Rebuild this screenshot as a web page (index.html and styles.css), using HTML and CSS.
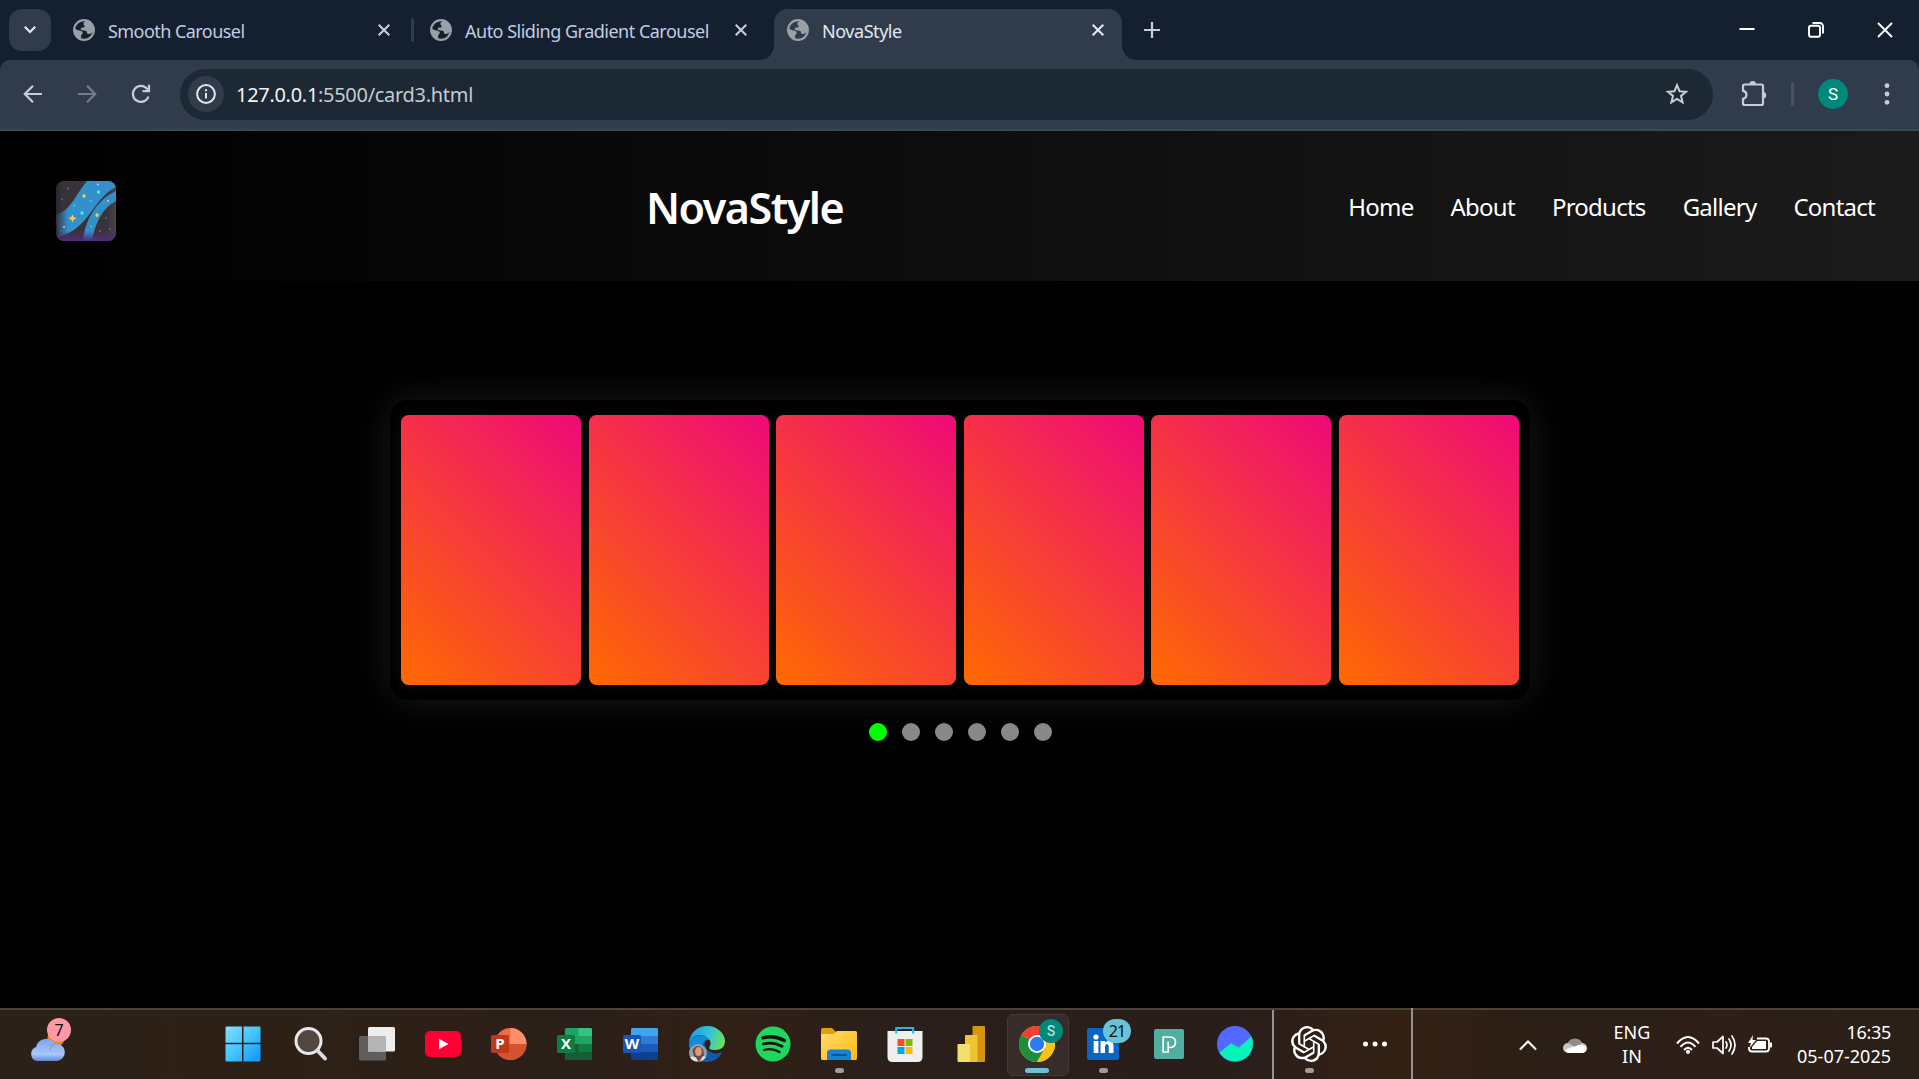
FILE: index.html
```html
<!DOCTYPE html>
<html lang="en">
<head>
<meta charset="utf-8">
<title>NovaStyle</title>
<link rel="stylesheet" href="styles.css">
</head>
<body>
<svg class="defs" width="0" height="0" aria-hidden="true">
  <symbol id="globe" viewBox="0 0 22 22">
    <circle cx="11" cy="11" r="9.9" fill="none" stroke="#9aa0a6" stroke-width="2.1"/>
    <path d="M14 1.6c-2 .6-3.300 1.500-3.600 3.200-.3 1.400 1.200 1.200 1.300 2.500.1 1.500-1.500 1.300-3 1.400-1.300.2-1 1.600-.4 2.300.8.900 3.900.2 5 1.100 1.100.9.200 2.600 1.700 2.800 1.800.3 4.600-.9 5.400-2.600C22 7 18.300 2.400 14 1.600zM1.500 8.800c1.400 2.200 3.300 2.300 5 2.700 1.800.4 3.200.6 3.300 2.300.1 1.400-1.600 1.500-1.700 3-.1 1.200.5 2.300-.3 3.300C3.300 19.300.5 13.800 1.500 8.800z" fill="#9aa0a6"/>
  </symbol>
  <symbol id="cross" viewBox="0 0 14 14"><path d="M1.700 1.700l10.600 10.600M12.300 1.700L1.700 12.300" fill="none" stroke="currentColor" stroke-width="2.100"/></symbol>
</svg>

<header class="browser">
  <div class="tabstrip">
    <div class="tab-search"><svg width="14" height="10" viewBox="0 0 14 10"><path d="M1.800 1.800L7 7l5.200-5.200" fill="none" stroke="#e3e8f0" stroke-width="2.200"/></svg></div>
    <div class="tab tab-first"><svg class="fav"><use href="#globe"/></svg><span class="t1">Smooth Carousel</span><svg class="x"><use href="#cross"/></svg></div>
    <i class="tab-sep"></i>
    <div class="tab tab-second"><svg class="fav"><use href="#globe"/></svg><span class="t2">Auto Sliding Gradient Carousel</span><svg class="x"><use href="#cross"/></svg></div>
    <div class="tab active"><svg class="fav"><use href="#globe"/></svg><span class="t3">NovaStyle</span><svg class="x"><use href="#cross"/></svg></div>
    <svg class="plus" width="16" height="16" viewBox="0 0 16 16"><path d="M8 0v16M0 8h16" stroke="#c3cbe0" stroke-width="2.200"/></svg>
    <div class="window-buttons">
      <svg width="16" height="16" viewBox="0 0 16 16"><path d="M.5 7h15" stroke="#fff" stroke-width="2"/></svg>
      <svg width="16" height="16" viewBox="0 0 16 16"><rect x="1" y="3.800" width="11" height="11" rx="2" fill="none" stroke="#fff" stroke-width="1.900"/><path d="M4.500 1h7q3.500 0 3.500 3.500v7" fill="none" stroke="#fff" stroke-width="1.900"/></svg>
      <svg width="16" height="16" viewBox="0 0 16 16"><path d="M1 1l14 14M15 1L1 15" stroke="#fff" stroke-width="1.900"/></svg>
    </div>
  </div>
  <div class="toolbar">
    <svg class="nav-icon" width="20" height="20" viewBox="0 0 20 20"><path d="M19 10H2M10 1.800L1.800 10l8.200 8.200" fill="none" stroke="#c3cbe0" stroke-width="2.200"/></svg>
    <svg class="nav-icon" width="20" height="20" viewBox="0 0 20 20"><path d="M1 10h17M10 1.800l8.200 8.200-8.200 8.200" fill="none" stroke="#747d8c" stroke-width="2.200"/></svg>
    <svg class="nav-icon" width="20" height="20" viewBox="0 0 20 20"><path d="M17.500 12.500a8 8 0 1 1-1.300-7.600L18 6.900M18 .8v6.400h-6.500" fill="none" stroke="#c3cbe0" stroke-width="2.200"/></svg>
    <div class="omnibox">
      <div class="info"><svg width="20" height="20" viewBox="0 0 20 20"><circle cx="10" cy="10" r="8.900" fill="none" stroke="#e3e6ea" stroke-width="2"/><path d="M10 9v5.500M10 5.200v2.100" stroke="#e3e6ea" stroke-width="2"/></svg></div>
      <span class="url"><b>127.0.0.1</b>:5500/card3.html</span>
      <svg class="star" width="24" height="24" viewBox="0 0 24 24"><path d="M12 3.200l2.500 6 6.500.5-5 4.200 1.600 6.400L12 16.900l-5.600 3.400L8 13.900 3 9.700l6.500-.5z" fill="none" stroke="#c9cdd0" stroke-width="2"/></svg>
    </div>
    <svg class="ext" width="28" height="28" viewBox="0 0 28 28"><path d="M5.500 4.500h17q1.500 0 1.500 1.500v17.500q0 1.500-1.500 1.500h-17Q4 25 4 23.500v-4.700c4.600-.6 4.600-7.300 0-8V6q0-1.500 1.500-1.500z" fill="none" stroke="#c3cbe0" stroke-width="2.200"/><path d="M10.500 4.200a3.200 3.200 0 0 1 6.400 0zM24 12a3.200 3.200 0 0 1 0 6.400z" fill="#c3cbe0"/></svg>
    <i class="tool-sep"></i>
    <div class="avatar">S</div>
    <svg class="menu" width="6" height="28" viewBox="0 0 6 28"><g fill="#c3cbe0"><circle cx="3" cy="5.700" r="2.400"/><circle cx="3" cy="14" r="2.400"/><circle cx="3" cy="22.300" r="2.400"/></g></svg>
  </div>
</header>

<main class="page">
  <div class="site-header">
    <svg class="logo" viewBox="0 0 60 60">
      <defs>
        <linearGradient id="lg1" x1="0" x2="1"><stop offset="0" stop-color="#3a3340"/><stop offset=".2" stop-color="#3390cb"/><stop offset="1" stop-color="#3390cb"/></linearGradient>
        <linearGradient id="lg2" x1="0" y1="0" x2="0" y2="1"><stop offset=".83" stop-color="#4d2d78" stop-opacity="0"/><stop offset="1" stop-color="#4d2d78"/></linearGradient>
        <linearGradient id="lg4" x1="0" y1="0" x2="1" y2="0"><stop offset="0" stop-color="#2b2430"/><stop offset=".12" stop-color="#393339"/><stop offset=".85" stop-color="#393339"/><stop offset="1" stop-color="#49444a"/></linearGradient>
      </defs>
      <rect width="60" height="60" fill="url(#lg4)"/>
      <path d="M31 0H60V6C36 18 34 48 2 56L0 34C16 28 18 16 31 0z" fill="url(#lg1)"/>
      <path d="M60 10v10C46 27 39 43 36 60h-9C29 38 42 18 60 10z" fill="#3390c6"/>
      <rect width="60" height="60" fill="url(#lg2)"/>
      <g fill="#ffcb45"><path d="M16.500 33.500l1.300 2.500 2.700 1.300-2.700 1.300-1.300 2.800-1.300-2.800-2.700-1.300 2.700-1.300zM28 12.800l2 2.200-2 2.200-2-2.200zM41 31.800l2 2.200-2 2.200-2-2.200z"/></g>
      <g fill="#3cf0ff"><circle cx="42.500" cy="11" r="1.700"/><circle cx="26" cy="32" r="1.700"/></g>
      <g fill="#5ccbf0"><circle cx="35" cy="20" r=".9"/><circle cx="18.500" cy="24.500" r=".9"/><circle cx="35" cy="45.500" r=".9"/></g>
      <g fill="#4670c8"><circle cx="12" cy="7.500" r=".9"/><circle cx="6" cy="18" r=".9"/><circle cx="50" cy="37" r=".9"/><circle cx="44" cy="50" r=".9"/><circle cx="54" cy="48" r=".9"/></g>
      <g fill="#e9c7ef"><circle cx="42" cy="3.500" r=".9"/><circle cx="52" cy="20" r=".9"/><circle cx="8" cy="46" r=".9"/></g>
    </svg>
    <h1>NovaStyle</h1>
    <nav><a>Home</a><a>About</a><a>Products</a><a>Gallery</a><a>Contact</a></nav>
  </div>
  <section class="carousel">
    <div class="card"></div><div class="card"></div><div class="card"></div><div class="card"></div><div class="card"></div><div class="card"></div>
  </section>
  <div class="dots"><i class="on"></i><i></i><i></i><i></i><i></i><i></i></div>
</main>

<footer class="taskbar">
  <div class="widget">
    <svg width="42" height="46" viewBox="0 0 42 46">
      <defs><linearGradient id="cl" x1="0" y1="0" x2="0" y2="1"><stop offset="0" stop-color="#7ba3ee"/><stop offset=".7" stop-color="#a9c7f8"/><stop offset="1" stop-color="#5d86d8"/></linearGradient></defs>
      <circle cx="28" cy="20" r="8.500" fill="#f7820c"/>
      <path d="M9 43a7.300 7.300 0 0 1-1-14 10.500 10.500 0 0 1 19-3.500A8.800 8.800 0 0 1 29 43z" fill="url(#cl)"/>
      <path d="M22 32q1-5.500 5.500-6.500" fill="none" stroke="#6b94e2" stroke-width="1"/>
    </svg>
    <b class="count">7</b>
  </div>
  <div class="apps">
    <div class="app"><svg viewBox="0 0 36 36"><defs><linearGradient id="win" x1="0" y1="0" x2="1" y2="1"><stop offset="0" stop-color="#84deff"/><stop offset=".5" stop-color="#45c4ff"/><stop offset="1" stop-color="#0a93fa"/></linearGradient></defs><path d="M1.700.5H17v16.300H.5V1.700Q.5.500 1.700.5zM18.500.5h15.800q1.200 0 1.200 1.200v15.100h-17zM.5 18.300H17v17.200H1.700Q.5 35.500.5 34.300zM18.500 18.300h17v16q0 1.200-1.200 1.200H18.500z" fill="url(#win)"/></svg></div>
    <div class="app"><svg viewBox="0 0 36 36"><circle cx="15.500" cy="15" r="12.500" fill="#51473f" stroke="#e9e9ed" stroke-width="3"/><path d="M24.500 24.500l7.500 8" stroke="#d6dae2" stroke-width="4" stroke-linecap="round"/></svg></div>
    <div class="app"><svg viewBox="0 0 36 36"><rect y="10" width="27" height="24.500" rx="1.500" fill="#5e5e5e"/><rect x="9" y="1" width="27" height="24.500" rx="1.500" fill="#eee"/><path d="M9 10h18v15.500H9z" fill="#b5b5b5"/></svg></div>
    <div class="app"><svg viewBox="0 0 36 36"><rect y="5" width="36" height="26" rx="5" fill="#ff0033"/><path d="M14 12.800v10.400l9.500-5.200z" fill="#fff"/></svg></div>
    <div class="app"><svg viewBox="0 0 36 36"><circle cx="19.500" cy="18" r="16" fill="#ed6c47"/><path d="M19.500 2a16 16 0 0 1 16 16h-16z" fill="#ff8f6b"/><path d="M3.500 18h32a16 16 0 0 1-32 0z" fill="#d35230"/><rect y="9" width="18" height="18" rx="1.500" fill="#bf3819"/><text x="9" y="23.200" class="ms">P</text></svg></div>
    <div class="app"><svg viewBox="0 0 36 36"><rect x="8" y="2" width="27" height="32" rx="1.500" fill="#21a366"/><path d="M21.500 2H33.500q1.500 0 1.500 1.500V10H21.500z" fill="#33c481"/><path d="M8 18h27v14.500q0 1.500-1.500 1.500h-24Q8 34 8 32.500z" fill="#185c37"/><path d="M21.500 18H35v8H21.500z" fill="#107c41"/><rect y="9" width="18" height="18" rx="1.500" fill="#107c41"/><text x="9" y="23.200" class="ms">X</text></svg></div>
    <div class="app"><svg viewBox="0 0 36 36"><rect x="8" y="2" width="27" height="32" rx="1.500" fill="#103f91"/><path d="M9.500 2h24Q35 2 35 3.500V10H8V3.500Q8 2 9.500 2z" fill="#41a5ee"/><path d="M8 10h27v8H8z" fill="#2b7cd3"/><path d="M8 18h27v8H8z" fill="#185abd"/><rect y="9" width="18" height="18" rx="1.500" fill="#1756b5"/><text x="9" y="23.200" class="ms">W</text></svg></div>
    <div class="app"><svg viewBox="0 0 36 36"><defs><linearGradient id="eg" x1="0" y1=".3" x2="1" y2=".5"><stop offset="0" stop-color="#1a9ee8"/><stop offset=".55" stop-color="#35c3d7"/><stop offset="1" stop-color="#6be05a"/></linearGradient></defs><path d="M0 17C1 6 9 0 18 0c11 0 18 8 18 15 0 6-4 9-10 9-5 0-7-1-5-4 2-4-1-9-7-9.500C7 10 2 13 0 17z" fill="url(#eg)"/><path d="M0 18C3 8 14 6 19 13c-4 1-5 8 1 12 4 3 9 3 13 1-2 6-8 10-16 10C7 36 0 28 0 18z" fill="#1158a8"/><path d="M0 20C0 12 8 8 15 10c4 1 6 4 5 4-5-2-8 5-6 10L4 28z" fill="#128bd8"/><circle cx="9" cy="27" r="9" fill="#8fa3ab"/><path d="M3.500 24q5-8 11 0l.5 7-6 5-4-5z" fill="#75493c"/><ellipse cx="9.500" cy="25.500" rx="3.300" ry="4.500" fill="#d69b80"/><path d="M1 31.500q5-3 8 3.500-5 1-8-3.500M11 35l3-5 3 1q-2 3-6 4" fill="#d5e4ee"/></svg></div>
    <div class="app"><svg viewBox="0 0 36 36"><circle cx="18" cy="18" r="17.500" fill="#1ed760"/><g fill="none" stroke="#17120d" stroke-linecap="round"><path d="M8 11.800q11-3 21.500 2.700" stroke-width="3.400"/><path d="M8.500 18q9.500-2.700 18.500 2.300" stroke-width="2.800"/><path d="M9 24q8-2.300 15.500 2" stroke-width="2.300"/></g></svg></div>
    <div class="app run"><svg viewBox="0 0 36 36"><defs><linearGradient id="fg" x1="0" y1="0" x2="1" y2="1"><stop offset="0" stop-color="#ffdc6b"/><stop offset="1" stop-color="#fdb913"/></linearGradient></defs><path d="M0 4q0-2 2-2h9l4 4h-1v8H0z" fill="#dda00b"/><path d="M0 8h12l4-3h18.500Q36 5 36 6.500v26q0 1.500-1.500 1.500h-33Q0 34 0 32.500z" fill="url(#fg)"/><path d="M6 34v-7q0-3.500 3.500-3.500h17q3.500 0 3.500 3.500v7z" fill="#1582d2"/><path d="M11 29h14" stroke="#095398" stroke-width="2" stroke-linecap="round"/></svg></div>
    <div class="app"><svg viewBox="0 0 36 36"><path d="M9.200 7V2h17v5" fill="none" stroke="#27b1e8" stroke-width="2"/><path d="M.5 5h35v26q0 5-5 5h-25q-5 0-5-5z" fill="#efefef"/><path d="M9.200 4v3.500M26.200 4v3.500" stroke="#27b1e8" stroke-width="2"/><path d="M10.500 13h7v7h-7z" fill="#f35022"/><path d="M18.500 13h7v7h-7z" fill="#80ba04"/><path d="M10.500 21h7v7h-7z" fill="#02a4ef"/><path d="M18.500 21h7v7h-7z" fill="#ffb903"/></svg></div>
    <div class="app"><svg viewBox="0 0 36 36"><rect x="19.500" width="12.500" height="36" rx="1" fill="#d99313"/><rect x="12" y="9" width="12.500" height="27" rx="1" fill="#edc434"/><rect x="4.500" y="18" width="12.500" height="18" rx="1" fill="#f4df6e"/></svg></div>
    <div class="app current"><svg viewBox="0 0 36 36"><circle cx="18" cy="18" r="18" fill="#fbc116"/><path d="M18 18L2.400 9A18 18 0 0 1 33.600 9z" fill="#ea4335"/><path d="M2.400 9A18 18 0 0 0 18 36l7.800-13.500L18 18z" fill="#1e8e3e"/><path d="M18 9h15.600A18 18 0 0 1 18 36l7.800-13.500z" fill="#fbc116"/><circle cx="18" cy="18" r="9" fill="#fff"/><circle cx="18" cy="18" r="7.200" fill="#2f7bed"/></svg><b class="profile">S</b></div>
    <div class="app run"><svg viewBox="0 0 36 36"><rect x="2" y="2" width="32" height="32" rx="2" fill="#0a66c2"/><circle cx="11" cy="11" r="2.600" fill="#fff"/><path d="M8.700 15h4.700v12H8.700zM15.500 15H20v1.800q1.300-2.200 4-2.200 4.500 0 4.500 5.400v7h-4.700v-6.300q0-2.600-1.900-2.600-1.900 0-1.900 2.600V27h-4.500z" fill="#fff"/></svg><b class="badge">21</b></div>
    <div class="app"><svg viewBox="0 0 36 36"><rect x="3" y="3" width="30" height="30" rx="2" fill="#52aea0"/><path d="M12.200 11h6.300q6 0 6 5.200 0 5.300-6 5.300h-1.300V26h-5zM17.200 21.500v-6" fill="none" stroke="#fff" stroke-width="1.700"/></svg></div>
    <div class="app"><svg viewBox="0 0 36 36"><circle cx="18" cy="18" r="18" fill="#5468ff"/><path d="M2.500 26.500L14 17.300l8 4.200 12.500-11.300A18 18 0 0 1 2.500 26.500z" fill="#02f5b5"/></svg></div>
    <i class="bar-sep"></i>
    <div class="app run"><svg viewBox="0 0 24 24" class="gpt"><path fill="#fff" d="M22.282 9.821a5.985 5.985 0 0 0-.516-4.910 6.046 6.046 0 0 0-6.510-2.900A6.065 6.065 0 0 0 4.981 4.182a5.985 5.985 0 0 0-3.998 2.900 6.046 6.046 0 0 0 .743 7.097 5.980 5.980 0 0 0 .510 4.911 6.051 6.051 0 0 0 6.515 2.900A5.985 5.985 0 0 0 13.260 24a6.056 6.056 0 0 0 5.772-4.206 5.990 5.990 0 0 0 3.997-2.900 6.056 6.056 0 0 0-.747-7.073zM13.260 22.430a4.476 4.476 0 0 1-2.876-1.040l.141-.081 4.779-2.758a.795.795 0 0 0 .392-.681v-6.737l2.020 1.168a.071.071 0 0 1 .038.052v5.583a4.504 4.504 0 0 1-4.494 4.494zM3.600 18.304a4.470 4.470 0 0 1-.535-3.014l.142.085 4.783 2.759a.771.771 0 0 0 .780 0l5.843-3.369v2.332a.080.080 0 0 1-.033.062L9.740 19.950a4.500 4.500 0 0 1-6.140-1.646zM2.340 7.896a4.485 4.485 0 0 1 2.366-1.973V11.600a.766.766 0 0 0 .388.676l5.815 3.355-2.020 1.168a.076.076 0 0 1-.071 0l-4.830-2.786A4.504 4.504 0 0 1 2.340 7.872zm16.597 3.855l-5.833-3.387L15.119 7.200a.076.076 0 0 1 .071 0l4.830 2.791a4.494 4.494 0 0 1-.676 8.105v-5.678a.790.790 0 0 0-.407-.667zm2.010-3.023l-.141-.085-4.774-2.782a.776.776 0 0 0-.785 0L9.409 9.230V6.897a.066.066 0 0 1 .028-.061l4.830-2.787a4.500 4.500 0 0 1 6.680 4.660zM8.307 12.863l-2.020-1.164a.080.080 0 0 1-.038-.057V6.075a4.500 4.500 0 0 1 7.375-3.453l-.142.080-4.778 2.758a.795.795 0 0 0-.393.681zm1.097-2.365l2.602-1.500 2.607 1.500v2.999l-2.597 1.500-2.607-1.500z"/></svg></div>
    <div class="app"><svg viewBox="0 0 36 36"><g fill="#fff"><circle cx="8.500" cy="18" r="2.500"/><circle cx="18" cy="18" r="2.500"/><circle cx="27.500" cy="18" r="2.500"/></g></svg></div>
  </div>
  <i class="bar-sep tray-sep"></i>
  <div class="tray">
    <svg width="18" height="12" viewBox="0 0 18 12"><path d="M1.500 10L9 2.500l7.500 7.500" fill="none" stroke="#fff" stroke-width="2" stroke-linecap="round"/></svg>
    <svg class="cloud" width="24" height="18" viewBox="0 0 24 18"><path d="M5 17a5 5 0 0 1 0-10A8 8 0 0 1 19 7a5 5 0 0 1 0 10z" fill="#c9c5c1"/><path d="M5 7A8 8 0 0 1 19 7l-7 4z" fill="#938d87"/><path d="M2 14q6-3 11-4 5-2 9 0 3 3 0 6l-2 1H5z" fill="#fff"/></svg>
    <div class="lang"><span>ENG</span><span>IN</span></div>
    <div class="status">
      <svg width="24" height="20" viewBox="0 0 24 20"><g fill="none" stroke="#fff" stroke-width="2"><path d="M1 8.500q11-13 22 0M4.500 11.800q7.500-8.800 15 0M8 15q4-4.700 8 0"/></g><circle cx="12" cy="16.800" r="2.100" fill="#fff"/></svg>
      <svg width="24" height="20" viewBox="0 0 24 20"><path d="M1 7h4l6-5.500v17L5 13H1z" fill="none" stroke="#fff" stroke-width="1.700" stroke-linejoin="round"/><path d="M14 7q2 3 0 6M17 4q4 6 0 12M20 1q6 9 0 18" fill="none" stroke="#fff" stroke-width="1.700" stroke-linecap="round"/></svg>
      <svg width="24" height="20" viewBox="0 0 24 20"><path d="M9 3.500h9q3 0 3 3v7q0 3-3 3H4q-3 0-3-3V12" fill="none" stroke="#fff" stroke-width="1.800"/><path d="M9 6h9v8H4v-2zM22 7.500h1.200q.8 0 .8 1v3q0 1-.8 1H22zM5 0L0 8h3l-1.500 5L8 5H4.500z" fill="#fff"/></svg>
    </div>
    <div class="clock"><span class="time">16:35</span><span>05-07-2025</span></div>
  </div>
</footer>
</body>
</html>
```
FILE: styles.css
```css
* { box-sizing: border-box; }

body {
  margin: 0;
  width: 1919px;
  height: 1079px;
  overflow: hidden;
  display: flex;
  flex-direction: column;
  background: #000;
  color: #fff;
  font-family: "Noto Sans", "Open Sans", sans-serif;
}

svg { display: block; flex: none; }
span, a, h1 { white-space: nowrap; }
.defs { position: absolute; }

/* Browser chrome */
.browser { height: 131px; flex: none; background: #142030; }
.tabstrip { height: 60px; display: flex; align-items: center; padding-left: 9px; }
.tab-search {
  width: 42px; height: 42px; border-radius: 13px; background: #303b4b;
  display: flex; align-items: center; justify-content: center;
}
.tab { display: flex; align-items: center; color: #c3cbe0; font-size: 18px; }
.tab span { padding-top: 2px; margin-left: 13px; line-height: 24px; }
.tab-first { width: 338px; margin-left: 22px; padding-right: 20px; }
.tab-second { width: 345px; margin-left: 16px; padding-right: 27px; }
.tab-sep { width: 3px; height: 24px; background: #303b4b; border-radius: 2px; }
.fav { width: 22px; height: 22px; }
.x { width: 14px; height: 14px; margin-left: auto; }
.t1 { letter-spacing: -.55px; }
.t2 { letter-spacing: -.5px; }
.t3 { letter-spacing: -.45px; }
.tab.active {
  position: relative; width: 348px; height: 51px; align-self: flex-end; margin-left: -1px;
  padding: 0 17px 9px 13px; background: #303b4b; color: #e3e8f0; border-radius: 14px 14px 0 0;
}
.tab.active::before, .tab.active::after {
  content: ""; position: absolute; bottom: 0; width: 14px; height: 14px;
}
.tab.active::before { left: -14px; background: radial-gradient(circle at 0 0, transparent 13.5px, #303b4b 14px); }
.tab.active::after { right: -14px; background: radial-gradient(circle at 100% 0, transparent 13.5px, #303b4b 14px); }
.plus { margin-left: 22px; }
.window-buttons { display: flex; gap: 53px; margin-left: auto; padding-right: 26px; }

.toolbar {
  height: 71px; padding: 0 29px 1px 23px; display: flex; align-items: center;
  background: #303b4b; border-bottom: 2px solid #3e4654; border-radius: 10px 10px 0 0;
}
.nav-icon { margin-right: 34px; }
.nav-icon:nth-of-type(3) { margin-right: 29px; }
.omnibox {
  width: 1534px; height: 51px; border-radius: 26px; background: #1c2834;
  display: flex; align-items: center; padding: 0 24px 0 8px;
}
.info {
  width: 36px; height: 36px; border-radius: 50%; background: #303b4b;
  display: flex; align-items: center; justify-content: center;
}
.url { margin-left: 12px; font-size: 20px; color: #c5cacf; letter-spacing: -.3px; }
.url b { font-weight: 400; color: #f1f3f5; }
.star { margin-left: auto; }
.ext { margin-left: 26px; }
.tool-sep { width: 3px; height: 24px; margin-left: 24px; background: #48535f; border-radius: 2px; }
.avatar {
  width: 30px; height: 30px; margin-left: 24px; border-radius: 50%; background: #00897b;
  font: 17px/30px Roboto, sans-serif; text-align: center;
}
.menu { margin-left: 36px; }

/* Page */
.page { flex: 1; display: flex; flex-direction: column; align-items: center; }
.site-header {
  width: 100%; height: 150px; padding: 0 44px 0 56px; display: flex; align-items: center;
  justify-content: space-between; background: linear-gradient(90deg, #000, #1b1b1b);
}
.logo { width: 60px; height: 60px; margin-top: 10px; border-radius: 8px; }
h1 { margin: 4px 0 0 25px; font-size: 43px; line-height: 60px; font-weight: 600; letter-spacing: -1.450px; }
nav { display: flex; gap: 37px; font-size: 24px; line-height: 32px; margin-top: 1px; letter-spacing: -.75px; }

.carousel {
  width: 1140px; height: 300px; margin-top: 119px; padding: 0 10.5px 0 11.5px; border-radius: 18px;
  background: #000; box-shadow: 0 0 38px rgba(255, 255, 255, .1);
  display: flex; align-items: center; justify-content: space-between;
}
.card {
  width: 180px; height: 270px; border-radius: 7.500px;
  background: linear-gradient(45deg, #ff6a00, #ee0979);
  box-shadow: 0 0 15px rgba(255, 255, 255, .06);
}
.dots { display: flex; gap: 15px; margin-top: 23px; padding-left: 2px; }
.dots i { width: 18px; height: 18px; border-radius: 50%; background: #888; }
.dots .on { background: #0f0; }

/* Taskbar */
.taskbar {
  height: 71px; flex: none; display: flex; align-items: stretch; border-top: 2px solid #49423b;
  background: linear-gradient(90deg, #2b2118, #2e2016 22%, #2b1f1b 30%, #312015 38%, #2b1f1a 45%, #291e1b 63%, #332013 73%, #2b1f17 81%, #2e1f17 90%, #2a2019);
}
.widget { position: relative; width: 210px; padding: 8px 0 0 28px; }
.count {
  position: absolute; left: 47px; top: 8px; width: 24px; height: 24px; border-radius: 50%;
  background: #ff99a4; color: #111; font-size: 16px; line-height: 24px; font-weight: 400; text-align: center;
}
.apps { display: flex; }
.app {
  position: relative; width: 60px; margin-right: 6px; display: flex;
  align-items: flex-start; justify-content: center; padding-top: 16px;
}
.app svg { width: 36px; height: 36px; }
.app:first-child { margin-left: 3px; margin-right: 8px; }
.ms { fill: #fff; font: 700 15px "Open Sans", sans-serif; text-anchor: middle; }
.run::after, .current::after {
  content: ""; position: absolute; left: 25.500px; bottom: 6px; width: 9px; height: 5px; border-radius: 3px; background: #a09a96;
}
.current::before {
  content: ""; position: absolute; left: 0; top: 4px; width: 60px; height: 60px; border-radius: 6px;
  background: #372c29; border: 1px solid #443936;
}
.current svg { position: relative; }
.current::after { left: 18px; width: 24px; background: #6cc1d7; }
.profile {
  position: absolute; left: 32px; top: 9px; width: 24px; height: 24px; border-radius: 50%;
  background: #00897b; color: #b5dcd7; font: 500 14px/24px Roboto, sans-serif; text-align: center;
}
.badge {
  position: absolute; left: 30px; top: 9px; width: 28px; height: 24px; border-radius: 12px;
  background: #67c3d8; color: #111; font-weight: 400; font-size: 16px; line-height: 24px; text-align: center; letter-spacing: -1px;
}
.bar-sep { width: 2px; background: #98918c; margin-left: 1px; margin-right: 5px; }
.tray-sep { margin: -2px 0 0 0; }
.tray { margin-left: auto; display: flex; align-items: center; padding: 0 28px 2px 0; font-size: 18px; line-height: 24px; }
.tray > svg, .status { position: relative; top: 1px; }
.cloud { margin-left: 26px; }
.lang { width: 36px; margin-left: 27px; display: flex; flex-direction: column; align-items: center; }
.status { display: flex; gap: 12px; margin-left: 26px; }
.clock { width: 97px; margin-left: 22px; display: flex; flex-direction: column; align-items: flex-end; }
.time { letter-spacing: -.3px; }
```
